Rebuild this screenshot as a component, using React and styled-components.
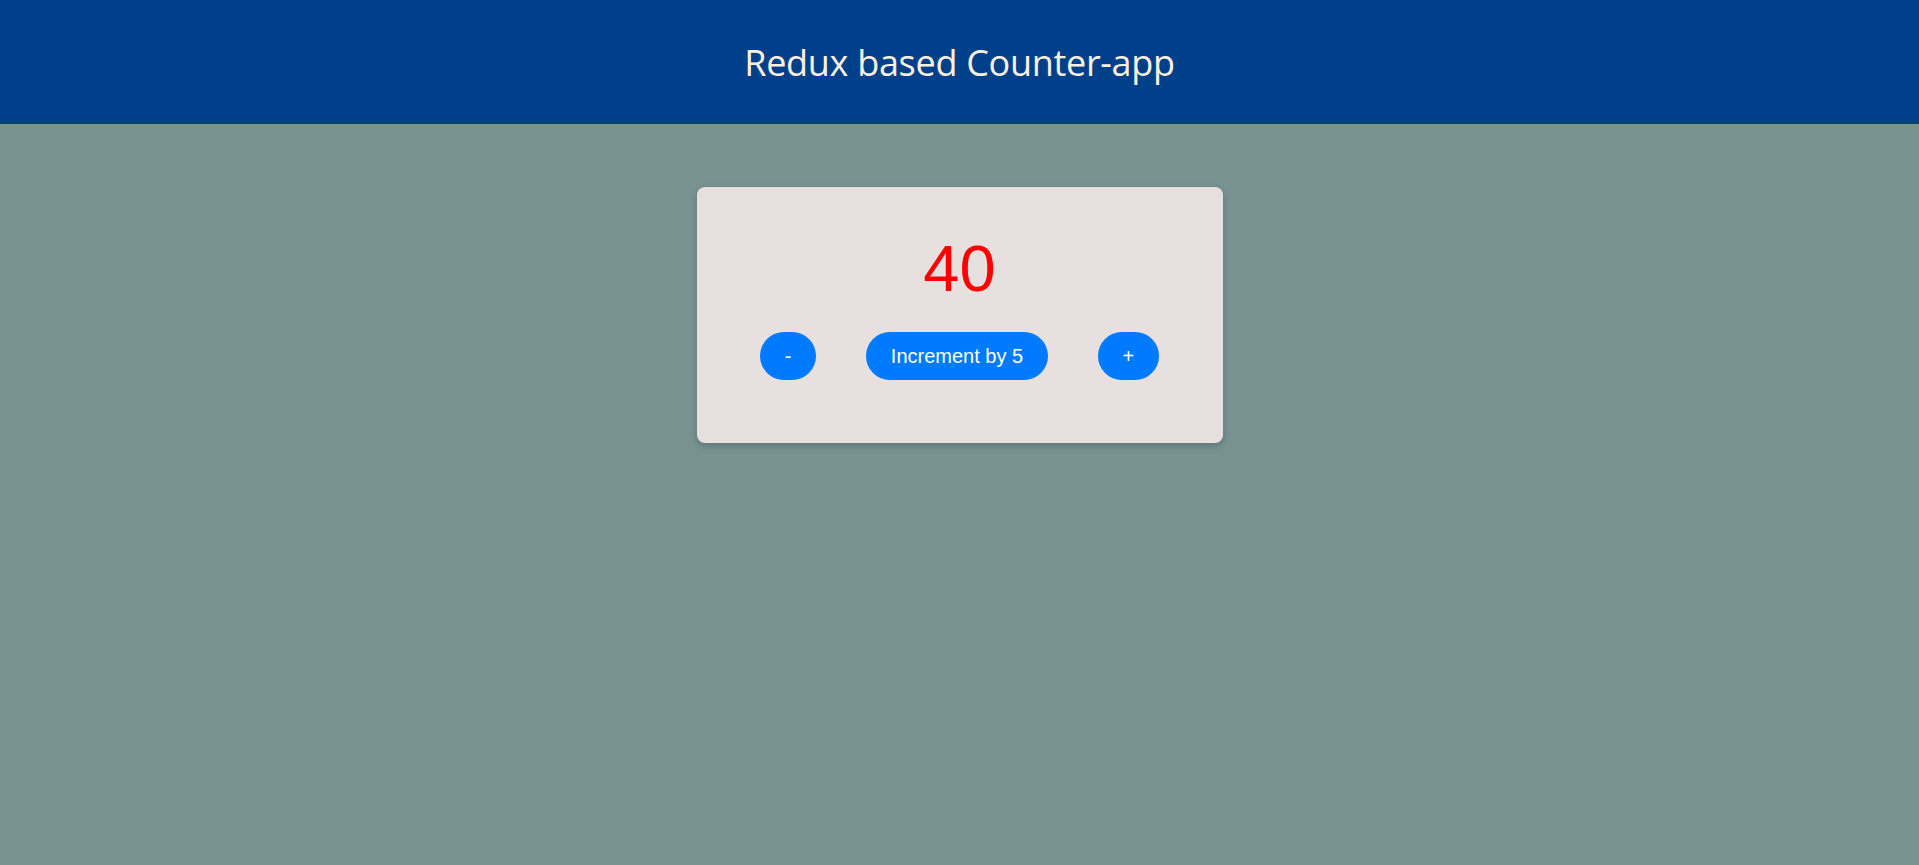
import React, { useState } from "react";
import styled, { createGlobalStyle } from "styled-components";

const GlobalStyle = createGlobalStyle`
  html, body {
    margin: 0;
    padding: 0;
    background: #799393;
    min-height: 100vh;
  }
`;

const App = () => {
  const [count, setCount] = useState(40);

  return (
    <>
      <GlobalStyle />
      <Header>
        <Title>Redux based Counter-app</Title>
      </Header>
      <Main>
        <Card>
          <Count>{count}</Count>
          <Controls>
            <RoundButton onClick={() => setCount(count - 1)}>-</RoundButton>
            <RoundButton onClick={() => setCount(count + 5)}>
              Increment by 5
            </RoundButton>
            <RoundButton onClick={() => setCount(count + 1)}>+</RoundButton>
          </Controls>
        </Card>
      </Main>
    </>
  );
};

export default App;

const Header = styled.header`
  height: 124px;
  background: #00408a;
  display: flex;
  align-items: center;
  justify-content: center;
`;

const Title = styled.h1`
  margin: 0;
  font-family: "Open Sans", "Noto Sans", sans-serif;
  font-weight: 400;
  font-size: 36px;
  color: #fcf0e0;
  letter-spacing: -0.3px;
`;

const Main = styled.main`
  display: flex;
  justify-content: center;
  padding-top: 63px;
`;

const Card = styled.section`
  width: 526px;
  height: 256px;
  box-sizing: border-box;
  padding-top: 45px;
  background: #e8dfdf;
  border-radius: 8px;
  box-shadow: 0 3px 8px rgba(0, 0, 0, 0.22);
  display: flex;
  flex-direction: column;
  align-items: center;
`;

const Count = styled.div`
  font-family: "Liberation Sans", Arial, sans-serif;
  font-size: 65px;
  line-height: 74px;
  color: #ff0000;
`;

const Controls = styled.div`
  display: flex;
  gap: 50px;
  margin-top: 26px;
`;

const RoundButton = styled.button`
  height: 48px;
  padding: 0 24.7px;
  border: none;
  border-radius: 24px;
  background: #007bff;
  color: #ffffff;
  font-family: "Liberation Sans", Arial, sans-serif;
  font-size: 20px;
  cursor: pointer;
`;
